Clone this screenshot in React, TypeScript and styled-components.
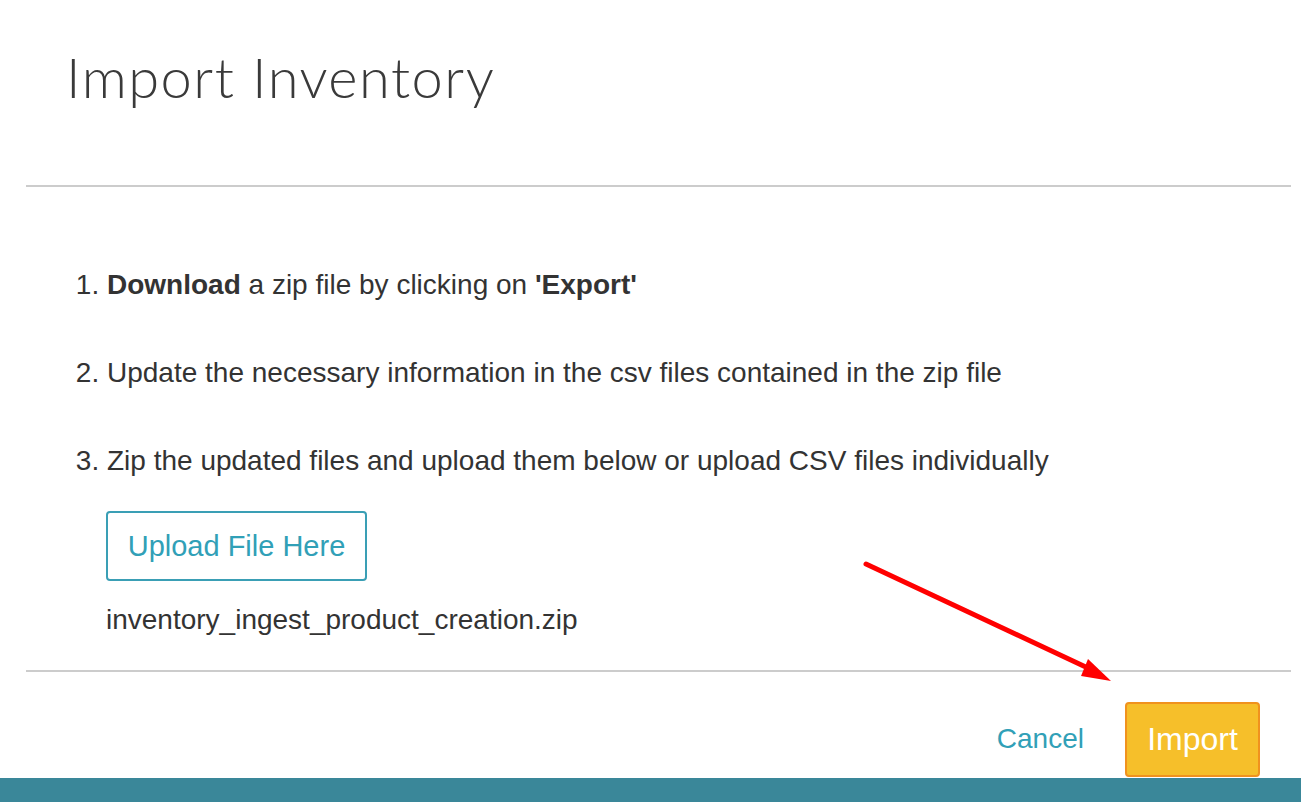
import React from "react";
import styled, { createGlobalStyle } from "styled-components";

const GlobalStyle = createGlobalStyle`
  html, body {
    margin: 0;
    padding: 0;
    background: #ffffff;
  }
  body {
    font-family: "Liberation Sans", Arial, sans-serif;
    color: #333333;
  }
`;

export default function App() {
  return (
    <>
      <GlobalStyle />
      <Page>
        <Header>
          <Title>Import Inventory</Title>
        </Header>
        <Divider />
        <Body>
          <Steps>
            <li>
              <b>Download</b> a zip file by clicking on <b>'Export'</b>
            </li>
            <li>Update the necessary information in the csv files contained in the zip file</li>
            <li>Zip the updated files and upload them below or upload CSV files individually</li>
          </Steps>
          <UploadArea>
            <UploadButton type="button">Upload File Here</UploadButton>
            <FileName>inventory_ingest_product_creation.zip</FileName>
          </UploadArea>
        </Body>
        <Divider />
        <Footer>
          <CancelLink type="button">Cancel</CancelLink>
          <ImportButton type="button">Import</ImportButton>
        </Footer>
        <BottomBar />

        {/* annotation arrow pointing at the import button */}
        <Arrow width="1301" height="802" viewBox="0 0 1301 802">
          <line
            x1="866"
            y1="564"
            x2="1090"
            y2="669"
            stroke="#ff0000"
            strokeWidth="5"
            strokeLinecap="round"
          />
          <polygon points="1111,681 1088,659 1081,676" fill="#ff0000" />
        </Arrow>
      </Page>
    </>
  );
}

const Page = styled.div`
  position: relative;
  width: 1301px;
  height: 802px;
  display: flex;
  flex-direction: column;
  overflow: hidden;
`;

const Header = styled.div`
  height: 185px;
  padding-left: 66px;
  box-sizing: border-box;
  padding-top: 44px;
`;

const Title = styled.h1`
  margin: 0;
  font-family: Lato, "Liberation Sans", sans-serif;
  font-weight: 300;
  font-size: 56px;
  line-height: 66px;
  color: #3a3a3a;
  letter-spacing: 1.5px;
`;

const Divider = styled.div`
  height: 2px;
  margin: 0 10px 0 26px;
  background: #cccccc;
`;

const Body = styled.div`
  padding: 83px 0 0 0;
  height: 483px;
  box-sizing: border-box;
`;

const Steps = styled.ol`
  margin: 0;
  padding-left: 107px;
  font-size: 28px;
  line-height: 30px;

  li {
    margin-bottom: 58px;
  }

  li:last-child {
    margin-bottom: 0;
  }

  b {
    font-weight: 700;
  }
`;

const UploadArea = styled.div`
  padding: 35px 0 0 106px;
  display: flex;
  flex-direction: column;
  align-items: flex-start;
  gap: 24px;
`;

const UploadButton = styled.button`
  width: 261px;
  height: 70px;
  border: 2px solid #3a9fb5;
  border-radius: 4px;
  background: #ffffff;
  color: #31a0b7;
  font-family: "Liberation Sans", Arial, sans-serif;
  font-size: 29px;
  padding: 0;
`;

const FileName = styled.div`
  font-size: 28px;
  line-height: 30px;
`;

const Footer = styled.div`
  display: flex;
  justify-content: flex-end;
  align-items: flex-start;
  gap: 41px;
  padding: 30px 41px 0 0;
  height: 106px;
  box-sizing: border-box;
`;

const CancelLink = styled.button`
  border: none;
  background: none;
  padding: 0;
  margin-top: 20px;
  color: #31a0b7;
  font-family: "Liberation Sans", Arial, sans-serif;
  font-size: 28px;
  line-height: 34px;
`;

const ImportButton = styled.button`
  width: 135px;
  height: 75px;
  border: 2px solid #f0921e;
  border-radius: 4px;
  background: #f6bf2a;
  color: #ffffff;
  font-family: "Liberation Sans", Arial, sans-serif;
  font-size: 32px;
  padding: 0;
`;

const BottomBar = styled.div`
  flex: 1;
  background: #3a8799;
`;

const Arrow = styled.svg`
  position: absolute;
  left: 0;
  top: 0;
  pointer-events: none;
`;
